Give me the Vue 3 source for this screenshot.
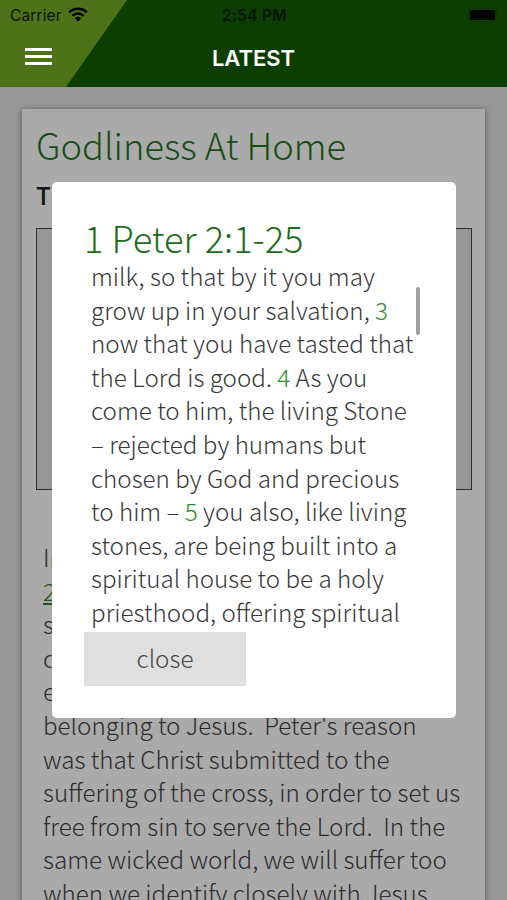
<script setup>
const article = [
  'belonging to Jesus.  Peter\'s reason',
  'was that Christ submitted to the',
  'suffering of the cross, in order to set us',
  'free from sin to serve the Lord.  In the',
  'same wicked world, we will suffer too',
  'when we identify closely with Jesus',
]
const passage = [
  [{ t: 'milk, so that by it you may' }],
  [{ t: 'grow up in your salvation, ' }, { n: '3' }],
  [{ t: 'now that you have tasted that' }],
  [{ t: 'the Lord is good. ' }, { n: '4' }, { t: ' As you' }],
  [{ t: 'come to him, the living Stone' }],
  [{ t: '– rejected by humans but' }],
  [{ t: 'chosen by God and precious' }],
  [{ t: 'to him – ' }, { n: '5' }, { t: ' you also, like living' }],
  [{ t: 'stones, are being built into a' }],
  [{ t: 'spiritual house to be a holy' }],
  [{ t: 'priesthood, offering spiritual' }],
]
</script>

<template>
  <div class="screen">
    <header class="header">
      <div class="status">
        <div class="carrier">
          <span>Carrier</span>
          <svg class="wifi" viewBox="0 0 20 15" width="20" height="15">
            <path d="M1.2 5.4a12.6 12.6 0 0 1 17.6 0" fill="none" stroke="#000" stroke-width="2.5" />
            <path d="M4.4 8.8a8 8 0 0 1 11.2 0" fill="none" stroke="#000" stroke-width="2.4" />
            <path d="M10 14.4 6.9 11.3a4.5 4.5 0 0 1 6.2 0z" fill="#000" />
          </svg>
        </div>
        <div class="time">2:54 PM</div>
        <div class="power"><div class="battery"><i></i></div></div>
      </div>
      <div class="navbar">
        <div class="menu"><i></i><i></i><i></i></div>
        <div class="heading">LATEST</div>
        <div></div>
      </div>
    </header>
    <main class="page">
      <article class="card">
        <h1 class="title">Godliness At Home</h1>
        <div class="subtitle">To</div>
        <div class="media"></div>
        <div class="text">
          <div class="line">In</div>
          <div class="line"><a class="ref">2:</a></div>
          <div class="line">s</div>
          <div class="line">c</div>
          <div class="line">e</div>
          <div v-for="l in article" :key="l" class="line">{{ l }}</div>
        </div>
      </article>
    </main>
    <section class="modal">
      <h2 class="modal-title">1 Peter 2:1-25</h2>
      <div class="passage">
        <div v-for="(l, i) in passage" :key="i" class="line"><span v-for="(p, j) in l" :key="j" :class="{ verse: p.n }">{{ p.n || p.t }}</span></div>
        <i class="thumb"></i>
      </div>
      <button class="close">close</button>
    </section>
  </div>
</template>

<style>
body { margin: 0; overflow: hidden; }
</style>

<style scoped>
* { box-sizing: border-box; }
.screen {
  position: relative; width: 507px; height: 900px; overflow: hidden;
  display: flex; flex-direction: column; background: #979797; color: #2c2c2c;
  font-family: "Noto Sans CJK SC", sans-serif; font-weight: 300;
}
.header {
  height: 87px; flex: none; background: #0c3e02; position: relative;
  font-family: Inter, sans-serif;
}
.header::before {
  content: ""; position: absolute; inset: 0; background: #4d7217;
  clip-path: polygon(0 0, 127px 0, 66px 100%, 0 100%);
}
.status, .navbar { position: relative; display: grid; grid-template-columns: 1fr auto 1fr; align-items: center; }
.status { height: 30px; padding: 0 10px; font-size: 15.5px; font-weight: 400; color: #0a1400; }
.carrier { display: flex; align-items: center; gap: 6px; letter-spacing: .12px; }
.wifi { display: block; margin-bottom: 1px; }
.time { font-weight: 600; color: #041500; letter-spacing: .3px; padding-left: 2px; }
.power { display: flex; justify-content: flex-end; }
.battery { width: 29px; height: 14px; padding: 1px; border: 1px solid #0a3302; border-radius: 4px; margin-bottom: 1px; }
.battery i { display: block; height: 10px; width: 25px; border-radius: 2px; background: #000; }
.navbar { height: 57px; padding: 0 25px; }
.menu { width: 27px; display: flex; flex-direction: column; gap: 4px; margin-bottom: 4px; }
.menu i { height: 3px; background: #fff; }
.heading { color: #fff; font-size: 22px; line-height: 30px; font-weight: 600; margin-bottom: 2px; }
.page { flex: 1; padding: 22px 22px 0; overflow: hidden; }
.card { height: 900px; background: #aaa; padding: 8px 13px 0 14px; box-shadow: 0 1px 6px rgba(0,0,0,.45); }
.title { margin: 0; font-weight: 300; font-size: 36.3px; line-height: 54px; color: #174d14; white-space: nowrap; }
.subtitle { font-size: 24.2px; line-height: 34px; margin-top: 7px; font-weight: 500; font-kerning: none; letter-spacing: .5px; color: #141414; }
.media { height: 262px; margin-top: 16px; border: 1.5px solid #2e2e2e; background: #979797; }
.text { padding: 50px 7px 0; }
.line { font-size: 24.2px; line-height: 33.6px; height: 33.6px; white-space: pre; }
.ref { color: #1c5a1a; text-decoration: underline; }
.modal {
  position: absolute; left: 52px; top: 182px; width: 404px; height: 536px; background: #fff; border-radius: 5px;
  padding: 29px 32px 32px; display: flex; flex-direction: column; align-items: flex-start;
}
.modal-title { margin: 0; font-weight: 300; font-size: 36.3px; line-height: 52px; height: 48px; color: #1b6e17; white-space: nowrap; }
.passage { position: relative; padding: 0 7px; height: 373px; align-self: stretch; }
.passage .line { color: #383838; }
.passage .verse { color: #2f8a2b; }
.thumb { position: absolute; right: 4px; top: 28px; width: 4px; height: 48px; border-radius: 2px; background: #a0a0a0; }
.close { width: 162px; height: 54px; border: 0; padding: 0 0 2px; background: #dfdfdf; color: #484848; font: 300 24.2px/52px "Noto Sans CJK SC", sans-serif; }
</style>
